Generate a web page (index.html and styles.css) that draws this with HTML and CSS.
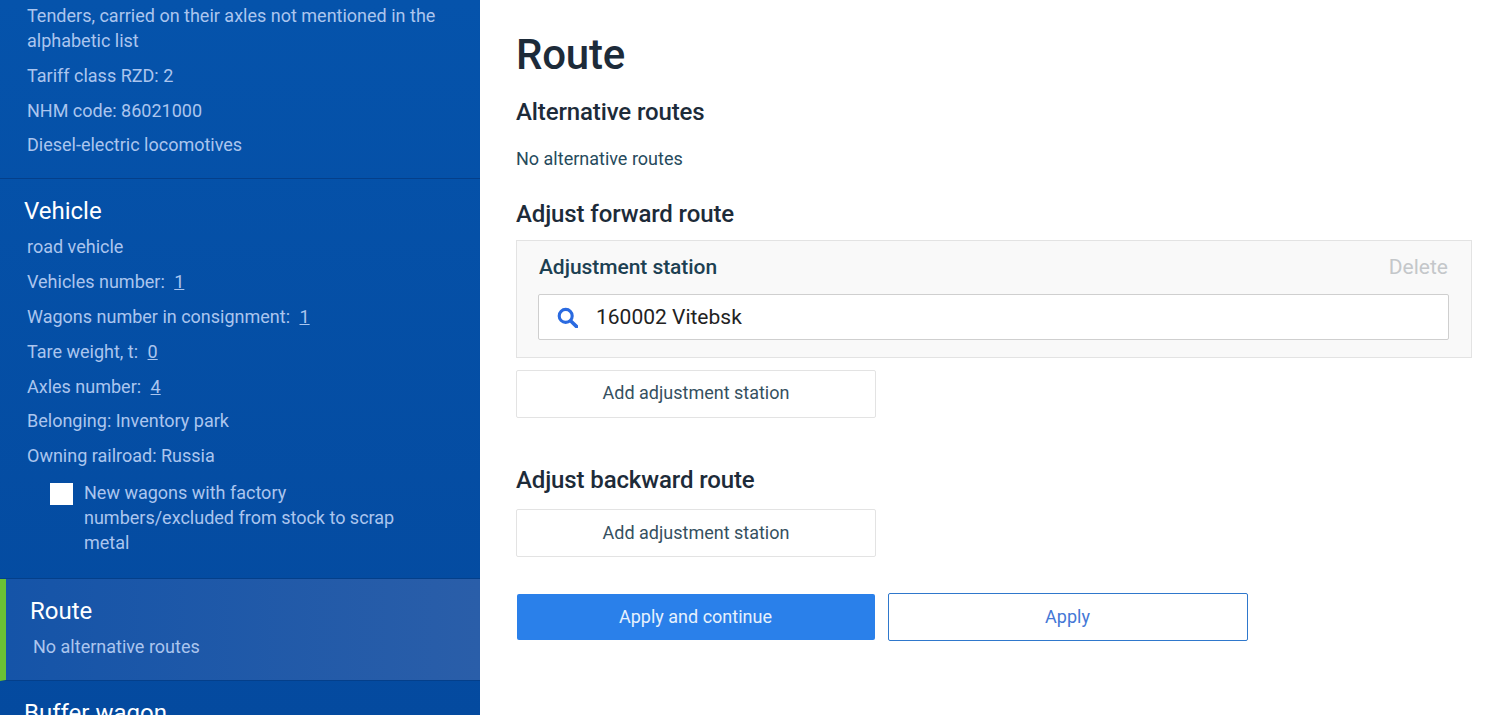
FILE: index.html
```html
<!DOCTYPE html>
<html lang="en">
<head>
  <meta charset="UTF-8">
  <title>Route</title>
  <link rel="stylesheet" href="styles.css">
</head>
<body>
  <div class="page">

    <!-- SIDEBAR -->
    <aside class="sidebar">
      <div class="side-scroll">
        <section class="side-block side-first">
          <p class="side-item">Tenders, carried on their axles not mentioned in the alphabetic list</p>
          <p class="side-item">Tariff class RZD: 2</p>
          <p class="side-item">NHM code: 86021000</p>
          <p class="side-item">Diesel-electric locomotives</p>
        </section>

        <section class="side-block">
          <h3 class="side-title">Vehicle</h3>
          <p class="side-item">road vehicle</p>
          <p class="side-item">Vehicles number: <a href="#" class="side-link">1</a></p>
          <p class="side-item">Wagons number in consignment: <a href="#" class="side-link">1</a></p>
          <p class="side-item">Tare weight, t: <a href="#" class="side-link">0</a></p>
          <p class="side-item">Axles number: <a href="#" class="side-link">4</a></p>
          <p class="side-item">Belonging: Inventory park</p>
          <p class="side-item">Owning railroad: Russia</p>
          <div class="side-check">
            <span class="check-box"></span>
            <span class="check-label">New wagons with factory numbers/excluded from stock to scrap metal</span>
          </div>
        </section>

        <section class="side-block side-active">
          <h3 class="side-title">Route</h3>
          <p class="side-item">No alternative routes</p>
        </section>

        <section class="side-block">
          <h3 class="side-title">Buffer wagon</h3>
        </section>
      </div>
    </aside>

    <!-- MAIN CONTENT -->
    <main class="content">
      <h1 class="page-title">Route</h1>

      <h2 class="section-title">Alternative routes</h2>
      <p class="section-text">No alternative routes</p>

      <h2 class="section-title">Adjust forward route</h2>
      <div class="station-card">
        <div class="station-head">
          <span class="station-title">Adjustment station</span>
          <span class="station-delete">Delete</span>
        </div>
        <div class="station-input">
          <svg class="search-icon" width="21" height="21" viewBox="0 0 21 21" fill="none">
            <circle cx="8.7" cy="8.9" r="6.5" stroke="#2a6ae0" stroke-width="3.1"/>
            <path d="M13.8 14 L19.6 19.6" stroke="#2a6ae0" stroke-width="3.6" stroke-linecap="round"/>
          </svg>
          <span>160002 Vitebsk</span>
        </div>
      </div>
      <button class="add-btn">Add adjustment station</button>

      <h2 class="section-title title-backward">Adjust backward route</h2>
      <button class="add-btn">Add adjustment station</button>

      <div class="actions">
        <button class="btn-primary">Apply and continue</button>
        <button class="btn-outline">Apply</button>
      </div>
    </main>
  </div>
</body>
</html>
```

FILE: styles.css
```css
/* ---------- RESET / BASE ---------- */
* {
  margin: 0;
  padding: 0;
  box-sizing: border-box;
  font-family: Roboto, 'Liberation Sans', sans-serif;
}
html, body {
  height: 100%;
  overflow: hidden;
  background: #fff;
}
.page {
  display: flex;
  height: 715px;
  overflow: hidden;
}

/* ---------- SIDEBAR ---------- */
.sidebar {
  width: 480px;
  flex-shrink: 0;
  height: 715px;
  overflow: hidden;
  background: linear-gradient(180deg, #0553ab 0%, #044a9f 100%);
}
.side-scroll {
  margin-top: -7px; /* the list is scrolled a little */
}
.side-block {
  padding: 17px 40px 10.4px 24px;
  border-bottom: 1px solid #043f8a;
}
.side-first {
  padding-top: 10px;
  padding-bottom: 10.8px;
}
.side-title {
  font-size: 24px;
  line-height: 30px;
  font-weight: 400;
  color: #fff;
  margin-bottom: 8.25px;
}
.side-item {
  font-size: 18px;
  line-height: 25px;
  color: #abc5ee;
  padding-left: 3px;
  margin-bottom: 9.83px;
}
.side-first .side-item {
  margin-bottom: 9.8px;
}
.side-link {
  color: #abc5ee;
  margin-left: 5px;
}
.side-check {
  display: flex;
  gap: 11px;
  padding-left: 26px;
  margin: 12px 0 12.37px;
}
.check-box {
  width: 23px;
  height: 22px;
  margin-top: 3px;
  background: #fff;
  flex-shrink: 0;
}
.check-label {
  font-size: 18px;
  line-height: 25px;
  color: #abc5ee;
}
.side-active {
  background: linear-gradient(90deg, #1554a8 0%, #2a5ea9 100%);
  border-left: 6px solid #6ac033;
  padding-left: 24px;
  padding-bottom: 10.92px;
}

/* ---------- MAIN CONTENT ---------- */
.content {
  flex: 1;
  padding: 24px 25px 0 36px;
  color: #1f2d3a;
}
.page-title {
  font-size: 42px;
  line-height: 62px;
  font-weight: 500;
  letter-spacing: -0.2px;
  color: #1d2b39;
}
.section-title {
  font-size: 24px;
  line-height: 30px;
  font-weight: 500;
  letter-spacing: -0.12px;
  color: #1d2b39;
  margin-top: 11px;
}
.section-text {
  font-size: 18px;
  line-height: 25px;
  color: #264a5c;
  margin: 19px 0 28px;
}
.section-text + .section-title {
  margin-top: 0;
}
.title-backward {
  margin-top: 47px;
  margin-bottom: 14px;
}

/* Station card */
.station-card {
  margin-top: 11px;
  height: 118px;
  padding: 11px 22px 0 21px;
  background: #f9f9f9;
  border: 1px solid #e3e3e3;
}
.station-head {
  display: flex;
  justify-content: space-between;
  align-items: center;
  padding: 0 1px;
  height: 30px;
  margin-bottom: 12px;
}
.station-title {
  font-size: 21px;
  font-weight: 500;
  letter-spacing: -0.05px;
  color: #1c4052;
}
.station-delete {
  font-size: 21px;
  color: #c4c7ca;
}
.station-input {
  display: flex;
  align-items: center;
  gap: 18px;
  height: 46px;
  padding-left: 18px;
  background: #fff;
  border: 1px solid #cfcfcf;
  border-radius: 2px;
  font-size: 21px;
  color: #222;
}

/* Buttons */
button {
  cursor: pointer;
}
.add-btn {
  display: block;
  width: 360px;
  height: 48px;
  margin-top: 12px;
  padding-bottom: 3px;
  background: #fff;
  border: 1px solid #e3e3e3;
  border-radius: 2px;
  font-size: 18px;
  color: #35505f;
}
.title-backward + .add-btn {
  margin-top: 0;
  padding-bottom: 2px;
}
.actions {
  display: flex;
  align-items: center;
  gap: 13px;
  margin-top: 36px;
}
.btn-primary {
  width: 358px;
  height: 46px;
  margin-left: 0.5px;
  padding-bottom: 2px;
  background: #2a80ea;
  border: none;
  border-radius: 2px;
  font-size: 18px;
  color: #e6f1fd;
}
.btn-outline {
  width: 360px;
  height: 48px;
  padding-bottom: 2px;
  background: #fff;
  border: 1px solid #2f78cc;
  border-radius: 2px;
  font-size: 18px;
  color: #4478d6;
}
```
